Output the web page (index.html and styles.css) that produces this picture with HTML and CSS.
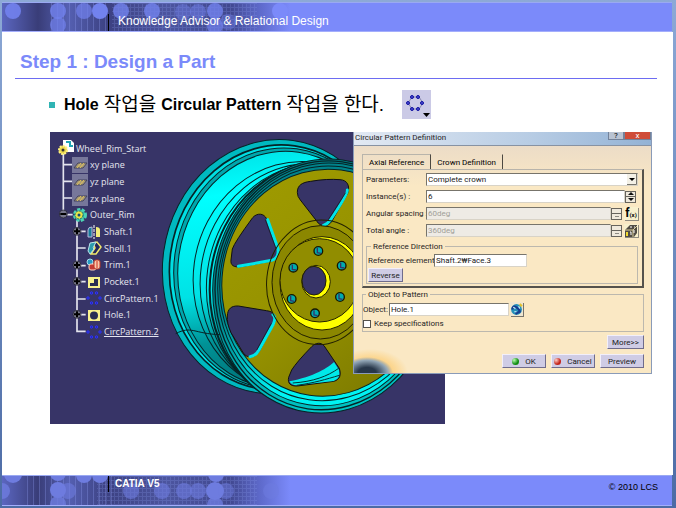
FILE: index.html
```html
<!DOCTYPE html>
<html lang="ko">
  <head>
    <meta charset="UTF-8" />
    <meta name="viewport" content="width=device-width, initial-scale=1.0" />
    <title>Knowledge Advisor &amp; Relational Design</title>
    <link rel="stylesheet" href="styles.css" />
  </head>
  <body>
    <!-- 公共图标 -->
    <svg class="defs" width="0" height="0" aria-hidden="true">
      <defs>
        <pattern id="grid" width="4" height="4" patternUnits="userSpaceOnUse">
          <path d="M0 .5H4M.5 0V4" stroke="#8c9cf2" stroke-width="1" opacity=".22" />
        </pattern>
        <pattern id="bars" width="6" height="30" patternUnits="userSpaceOnUse">
          <path d="M1.500 0V30" stroke="#8f9df5" opacity=".3" />
        </pattern>
        <linearGradient id="fade">
          <stop offset="0" stop-color="#5b66c0" />
          <stop offset=".12" stop-color="#393d78" />
          <stop offset=".22" stop-color="#5560b2" />
          <stop offset=".35" stop-color="#3c4182" />
          <stop offset=".55" stop-color="#4c559f" />
          <stop offset=".76" stop-color="#414890" />
          <stop offset=".86" stop-color="#5e6acb" />
          <stop offset=".96" stop-color="#7b8afa" />
        </linearGradient>
        <symbol id="plane" viewBox="0 0 16 16">
          <path d="M0 0H16V16H0z" fill="#77779a" />
          <path d="M2 11L6 6H15L11 11z" fill="#a99c76" stroke="#44445e" />
          <path d="M5 11L9 6M8 11L12 6" stroke="#e0c25c" />
        </symbol>
        <symbol id="circ" viewBox="0 0 16 16">
          <g fill="#28289c" stroke="#2e35ff">
            <circle cx="5.500" cy="3" r="1.200" /><circle cx="10.500" cy="3" r="1.200" />
            <circle cx="2" cy="8" r="1.200" /><circle cx="14" cy="8" r="1.200" />
            <circle cx="5.500" cy="13" r="1.200" /><circle cx="10.500" cy="13" r="1.200" />
          </g>
        </symbol>
      </defs>
    </svg>

    <div class="slide">
      <header class="band">
        <svg class="texture" width="300" height="29" aria-hidden="true">
          <path d="M0 0H300V29H0z" fill="url(#fade)" />
          <path d="M110 0H255V29H110z" fill="url(#grid)" />
          <path d="M46 0H108V29H46z" fill="url(#bars)" />
          <g fill="#7282ee">
            <circle cx="11" cy="8" r="8" opacity=".9" />
            <circle cx="56" cy="8" r="8" opacity=".8" />
            <circle cx="56" cy="22" r="8" opacity=".7" />
            <circle cx="82" cy="8" r="8" opacity=".7" />
            <circle cx="98" cy="8" r="8" />
            <circle cx="119" cy="8" r="8" opacity=".8" />
            <circle cx="150" cy="8" r="8" opacity=".8" />
            <circle cx="181" cy="9" r="8" opacity=".4" />
            <circle cx="196" cy="9" r="8" opacity=".5" />
            <circle cx="213" cy="8" r="8" opacity=".8" />
            <circle cx="213" cy="23" r="8" opacity=".7" />
            <circle cx="226" cy="19" r="8" opacity=".4" />
            <circle cx="278" cy="8" r="8" fill="#7b8afa" />
          </g>
        </svg>
        <p class="course">Knowledge Advisor &amp; Relational Design</p>
      </header>

      <main class="content">
        <h1 class="title">Step 1 : Design a Part</h1>
        <div class="lead">
          <p class="task">Hole <span class="ko">작업을</span> Circular Pattern <span class="ko">작업을 한다.</span></p>
          <svg class="tool" viewBox="0 0 29 29" role="img" aria-label="Circular Pattern">
            <path d="M0 0H29V29H0z" fill="#cbcae6" />
            <path d="M10 7H17L21 13L17 19H10L6 13z" fill="none" stroke="#8585ad" />
            <g fill="#4a4ad0" stroke="#1010a0">
              <circle cx="10" cy="7" r="1.500" /><circle cx="16" cy="7" r="1.500" />
              <circle cx="6" cy="13" r="1.500" /><circle cx="20" cy="13" r="1.500" />
              <circle cx="10" cy="19" r="1.500" /><circle cx="16" cy="19" r="1.500" />
            </g>
            <path d="M21 23H28L24.500 27z" />
          </svg>
        </div>

        <div class="figure">
          <div class="viewer">
            <!-- 轮毂模型 -->
            <svg class="model" viewBox="0 0 1185 876" aria-hidden="true">
              <defs>
                <linearGradient id="barrel" x1="0" y1="0" x2=".25" y2="1">
                  <stop offset="0" stop-color="#00d5db" />
                  <stop offset=".25" stop-color="#00ffff" />
                  <stop offset=".65" stop-color="#00e2e5" />
                  <stop offset=".85" stop-color="#009296" />
                  <stop offset="1" stop-color="#007b80" />
                </linearGradient>
                <linearGradient id="lip" x1=".2" y1="0" x2=".5" y2="1">
                  <stop offset="0" stop-color="#007f87" />
                  <stop offset=".6" stop-color="#008c93" />
                  <stop offset=".82" stop-color="#00b5b8" />
                  <stop offset="1" stop-color="#00c3c3" />
                </linearGradient>
                <linearGradient id="rim" x1="0" y1="0" x2=".2" y2="1">
                  <stop offset="0" stop-color="#008189" />
                  <stop offset=".7" stop-color="#008c93" />
                  <stop offset="1" stop-color="#00f3f3" />
                </linearGradient>
                <linearGradient id="face" x1="0" y1="0" x2="1" y2="1">
                  <stop offset="0" stop-color="#a09c00" />
                  <stop offset=".5" stop-color="#969200" />
                  <stop offset="1" stop-color="#777500" />
                </linearGradient>
              </defs>
              <path d="M0 0H1185V876H0z" fill="#373467" />
              <g fill="none" stroke="#062326" stroke-width="3">
                <ellipse cx="676" cy="404" rx="338" ry="382" transform="rotate(8 676 404)" fill="#00b9c0" />
                <ellipse cx="683" cy="406" rx="324" ry="368" transform="rotate(8 683 406)" fill="#00dfe3" stroke-width="5" />
                <ellipse cx="690" cy="409" rx="318" ry="362" transform="rotate(8 690 409)" fill="#00a7ad" />
                <ellipse cx="696" cy="412" rx="312" ry="355" transform="rotate(8 696 412)" fill="url(#barrel)" />
                <ellipse cx="748" cy="436" rx="318" ry="348" transform="rotate(8 748 436)" />
                <ellipse cx="769" cy="446" rx="318" ry="352" transform="rotate(8 769 446)" />
                <ellipse cx="790" cy="456" rx="320" ry="362" transform="rotate(8 790 456)" />
                <ellipse cx="804" cy="460" rx="324" ry="370" transform="rotate(8 804 460)" stroke-width="6" />
                <path d="M377 605C425 580 430 605 510 608" />
                <ellipse cx="825" cy="462" rx="336" ry="382" transform="rotate(8 825 462)" fill="url(#lip)" />
                <ellipse cx="825" cy="460" rx="329" ry="374" transform="rotate(8 825 460)" stroke-width="4" />
                <ellipse cx="826" cy="457" rx="322" ry="365" transform="rotate(8 826 457)" fill="url(#rim)" />
                <ellipse cx="826" cy="454" rx="316" ry="353" transform="rotate(8 826 454)" />
                <ellipse cx="826" cy="452" rx="310" ry="341" transform="rotate(8 826 452)" fill="url(#face)" />
              </g>
              <g fill="#373467" stroke="#111" stroke-width="3">
                <path d="M742 181C742 160 756 151 782 148C817 142 844 141 870 143C892 144 901 162 893 184L846 267C835 286 811 286 800 267L751 204Q742 194 742 181z" />
                <path d="M608 257C621 242 642 243 650 261L684 352C690 372 683 381 664 387L573 404C550 407 541 399 543 384L547 351Q554 330 608 257z" />
                <path d="M532 552C533 530 544 521 565 522L649 536C673 539 681 550 673 574L629 656C617 678 591 681 580 663L543 602Q530 573 532 552z" />
                <path d="M785 644C798 631 813 631 822 641L868 709C874 729 870 743 851 748L742 762C721 763 712 754 716 736L725 714Q740 690 785 644z" />
              </g>
              <path d="M718 748C790 735 838 705 852 690L867 714Q873 740 851 747L742 760Q725 761 718 748z" fill="#00e9e9" />
              <path d="M728 753C790 749 832 733 866 709M740 760C792 753 828 742 868 730" fill="none" stroke="#033" stroke-width="3" />
              <g fill="none" stroke="#00e6e9" stroke-width="9" stroke-linecap="round">
                <path d="M892 174Q895 184 840 266Q832 277 820 280" />
                <path d="M653 263L684 350Q688 378 665 385L565 403" />
                <path d="M669 548Q679 556 670 576L627 654Q617 672 600 674" />
              </g>
              <g fill="none" stroke="#111" stroke-width="2">
                <path d="M887 182L835 263M646 263L678 350M664 574L620 654" />
              </g>
              <g fill="none" stroke="#222000" stroke-width="3">
                <ellipse cx="810" cy="451" rx="160" ry="187" transform="rotate(6 810 451)" />
                <ellipse cx="811" cy="451" rx="145" ry="170" fill="#8b8700" />
                <ellipse cx="816" cy="454" rx="126" ry="140" fill="#ffff00" />
                <ellipse cx="809" cy="445" rx="119" ry="125" fill="#918d00" />
                <ellipse cx="798" cy="449" rx="43" ry="49" fill="#ffff00" />
                <ellipse cx="792" cy="446" rx="36" ry="43" fill="#373467" />
              </g>
              <g fill="#00aaae" stroke="#171700" stroke-width="4">
                <circle cx="805" cy="357" r="13" /><circle cx="730" cy="407" r="13" />
                <circle cx="875" cy="401" r="13" /><circle cx="725" cy="501" r="13" />
                <circle cx="795" cy="544" r="13" /><circle cx="870" cy="495" r="13" />
                <path d="M802 348V362L813 364M727 398V412L738 414M872 392V406L883 408M722 492V506L733 508M792 535V549L803 551M867 486V500L878 502" fill="none" stroke="#373467" />
              </g>
              <!-- 结构树连线 -->
              <g fill="none" stroke="#e4e4ee" stroke-width="5">
                <path d="M40 65V245M40 98H66M40 148H66M40 198H66M40 248H68" />
                <path d="M81 265V598H107M81 298H107M81 348H107M81 401H107M81 449H107M81 501H107M81 548H107" />
              </g>
              <g fill="#77778c" stroke="#191926" stroke-width="2">
                <circle cx="40" cy="246" r="12" /><circle cx="81" cy="298" r="12" />
                <circle cx="81" cy="399" r="12" /><circle cx="81" cy="448" r="12" /><circle cx="81" cy="547" r="12" />
              </g>
              <path d="M31 246H49M72 298H90M81 289V307M72 399H90M81 390V408M72 448H90M81 439V457M72 547H90M81 538V556" stroke="#000" stroke-width="6" />
            </svg>

            <ul class="tree">
              <li class="root">
                <svg viewBox="0 0 16 16"><path d="M5 0H13L16 3V12H5z" fill="#fff" /><path d="M8 2H12V6H15" fill="none" stroke="#21a5b5" stroke-width="2" /><circle cx="5" cy="10" r="4" fill="#ead64e" stroke="#fff17c" stroke-width="2" stroke-dasharray="2 1" /><circle cx="5" cy="10" r="1.500" fill="#333" /></svg>
                Wheel_Rim_Start
              </li>
              <li class="plane"><svg><use href="#plane" /></svg>xy plane</li>
              <li class="plane"><svg><use href="#plane" /></svg>yz plane</li>
              <li class="plane"><svg><use href="#plane" /></svg>zx plane</li>
              <li class="plane">
                <svg viewBox="0 0 16 16"><circle cx="8" cy="8" r="5.500" fill="#2fafa0" stroke="#4cd2b4" stroke-width="3" stroke-dasharray="3 1.500" /><circle cx="7" cy="8" r="4" fill="#e7e548" stroke="#176d72" stroke-dasharray="2 1" /><circle cx="7" cy="8" r="1.500" fill="#174c72" /></svg>
                Outer_Rim
              </li>
              <li class="leaf">
                <svg viewBox="0 0 16 16"><path d="M6 3Q2 3 2 6V13H6z" fill="#187d9b" stroke="#bbd" /><path d="M10 3Q14 3 14 6V13H10z" fill="#f2ec79" /><path d="M8 1V15" stroke="#fff" stroke-dasharray="3 1" /></svg>
                Shaft.1
              </li>
              <li class="leaf">
                <svg viewBox="0 0 16 16"><path d="M7 3L11 2L15 7L10 14H5L9 8z" fill="#24275e" stroke="#f0e76b" stroke-width="1.500" /><path d="M4 3L10 2L7 8L8 9L4 14L2 11z" fill="#2b9bad" stroke="#b9e5ec" /></svg>
                Shell.1
              </li>
              <li class="leaf">
                <svg viewBox="0 0 16 16"><circle cx="4" cy="5" r="3" fill="#279ac4" stroke="#a9deed" /><rect x="3" y="7" width="7" height="6" rx="2" fill="#c43b35" stroke="#ffd3c2" /><rect x="8" y="3" width="6" height="9" rx="2" fill="#f9c9ad" stroke="#b93625" /><path d="M11 4V11" stroke="#d2331e" /></svg>
                Trim.1
              </li>
              <li class="leaf">
                <svg viewBox="0 0 16 16"><path d="M3 4H13V13H3z" fill="#292d54" stroke="#f8f18d" stroke-width="2" /><path d="M3 4H8V9H3z" fill="#f8f18d" /></svg>
                Pocket.1
              </li>
              <li class="leaf"><svg><use href="#circ" /></svg>CircPattern.1</li>
              <li class="leaf">
                <svg viewBox="0 0 16 16"><path d="M3 4H13V13H3z" fill="#f8f18d" stroke="#f8f18d" stroke-width="2" /><circle cx="8" cy="8.500" r="4" fill="#292d54" /></svg>
                Hole.1
              </li>
              <li class="leaf"><svg><use href="#circ" /></svg><u>CircPattern.2</u></li>
            </ul>
          </div>

          <!-- 圆形阵列对话框 -->
          <form class="dialog">
            <div class="caption">
              <h2>Circular Pattern Definition</h2>
              <button class="help" type="button">?</button>
              <button class="close" type="button">x</button>
            </div>
            <div class="dialog-body">
              <div class="tabs">
                <button class="tab active" type="button">Axial Reference</button>
                <button class="tab" type="button">Crown Definition</button>
              </div>
              <div class="panel">
                <div class="row">
                  <label for="parameters">Parameters:</label>
                  <div class="choice">
                    <select id="parameters"><option>Complete crown</option></select>
                    <svg viewBox="0 0 10 11" aria-hidden="true"><path d="M0 0H10V11H0z" fill="#f3f0e6" /><path d="M9.500 0V10.500H0" fill="none" stroke="#77756d" /><path d="M2 4H8L5 7z" /></svg>
                  </div>
                </div>
                <div class="row">
                  <label for="instances">Instance(s) :</label>
                  <input id="instances" type="text" value="6" />
                  <span class="spin"><button type="button" aria-label="+"></button><button type="button" aria-label="-"></button></span>
                </div>
                <div class="row">
                  <label for="spacing">Angular spacing :</label>
                  <input id="spacing" type="text" value="60deg" disabled />
                  <span class="spin off"><button type="button" aria-label="+"></button><button type="button" aria-label="-"></button></span>
                  <button class="formula" type="button">f<small>(x)</small></button>
                </div>
                <div class="row">
                  <label for="total">Total angle :</label>
                  <input id="total" type="text" value="360deg" disabled />
                  <span class="spin off"><button type="button" aria-label="+"></button><button type="button" aria-label="-"></button></span>
                  <button class="formula" type="button" aria-label="formula">
                    <svg viewBox="0 0 14 14"><path d="M1 6L6 1H13V9L10 13H1z" fill="#504b43" /><path d="M1 6H9V13M9 6L13 2" fill="none" stroke="#d9ce9d" /><path d="M2 8H4V12H2z" fill="#f0d82f" /><path d="M6 8H7V11M10 6V9M6 3H8M10 3H11" stroke="#fff" fill="none" /></svg>
                  </button>
                </div>
                <fieldset class="direction">
                  <legend>Reference Direction</legend>
                  <div class="field">
                    <label for="element">Reference element:</label>
                    <input id="element" type="text" value="Shaft.2₩Face.3" />
                  </div>
                  <button class="btn reverse" type="button">Reverse</button>
                </fieldset>
              </div>
              <fieldset class="object">
                <legend>Object to Pattern</legend>
                <div class="field">
                  <label for="object">Object:</label>
                  <input id="object" type="text" value="Hole.1" />
                  <button class="pick" type="button" aria-label="Select">
                    <svg viewBox="0 0 12 12"><circle cx="6" cy="6" r="5" fill="#248fb9" /><path d="M2 6Q3 2 6 4T9 8L5 10" fill="none" stroke="#163b8f" stroke-width="2" /><path d="M3 4L5 5M8 3L9 5M4 8H6" stroke="#d5f7ff" /><path d="M9 1L11 3" stroke="#e3c12c" stroke-width="2" /></svg>
                  </button>
                </div>
                <label class="check"><input type="checkbox" />Keep specifications</label>
              </fieldset>
              <div class="more"><button class="btn" type="button">More&gt;&gt;</button></div>
              <div class="actions">
                <button class="btn" type="button"><i class="dot green"></i>OK</button>
                <button class="btn" type="button"><i class="dot red"></i>Cancel</button>
                <button class="btn" type="button">Preview</button>
              </div>
            </div>
          </form>
        </div>
      </main>

      <footer class="band foot">
        <svg class="texture" width="300" height="29" aria-hidden="true">
          <path d="M0 0H300V29H0z" fill="url(#fade)" />
          <path d="M20 0H110V29H20z" fill="url(#bars)" />
          <path d="M95 0H255V29H95z" fill="url(#grid)" />
          <g fill="#6e7cdf">
            <circle cx="11" cy="-2" r="9" /><circle cx="0" cy="15" r="8" opacity=".8" />
            <circle cx="56" cy="-3" r="8" /><circle cx="56" cy="14" r="8" /><circle cx="66" cy="15" r="8" opacity=".6" />
            <circle cx="56" cy="28" r="8" opacity=".8" />
            <circle cx="82" cy="-1" r="8" /><circle cx="98" cy="-1" r="8" />
            <circle cx="129" cy="15" r="8" opacity=".6" /><circle cx="160" cy="15" r="8" opacity=".6" />
            <circle cx="182" cy="15" r="8" opacity=".6" /><circle cx="196" cy="15" r="8" opacity=".6" />
            <circle cx="214" cy="-2" r="8" /><circle cx="213" cy="15" r="9" /><circle cx="224" cy="15" r="8" opacity=".5" />
            <circle cx="213" cy="29" r="8" opacity=".8" /><circle cx="269" cy="15" r="8" opacity=".5" />
          </g>
        </svg>
        <p class="product">CATIA V5</p>
        <p class="copyright">© 2010 LCS</p>
      </footer>
    </div>
  </body>
</html>
```
FILE: styles.css
```css
* {
  box-sizing: border-box;
  margin: 0;
  padding: 0;
}

body {
  background: linear-gradient(#8da9d6, #4c6ba5);
  font-family: "Liberation Sans", "Noto Sans CJK KR", sans-serif;
}
.defs {
  position: absolute;
}

.slide {
  display: flex;
  flex-direction: column;
  min-height: 100vh;
  padding: 2px 4px 2px 2px;
}

/* 顶部与底部色带 */
.band {
  display: grid;
  grid-template-columns: 106px 1fr auto;
  height: 30px;
  background: #7b8afa;
  border-top: 1px solid #9aa9f2;
  border-bottom: 1px solid #a4aefc;
  overflow: hidden;
}
.texture {
  grid-area: 1 / 1 / 2 / 4;
}
.course,
.product {
  grid-area: 1 / 2;
  align-self: end;
  height: 18px;
  padding-left: 9px;
  border-left: 1px solid #000;
  color: #fff;
  font-size: 12px;
  line-height: 15px;
}
.foot {
  height: 31px;
}
.product {
  align-self: start;
  height: 16px;
  padding-left: 6px;
  font-size: 10px;
  font-weight: bold;
}
.copyright {
  grid-area: 1 / 3;
  padding-right: 14px;
  font-size: 9px;
  line-height: 22px;
}

.content {
  flex: 1;
  margin-right: -1px;
  padding: 18px 16px 0 13px;
  background: #fff;
}
.title {
  padding: 0 5px 4px;
  border-bottom: 1px solid #6d6cf2;
  color: #7b8afa;
  font-size: 19px;
  line-height: 24px;
}
.lead {
  display: flex;
  align-items: center;
  gap: 18px;
  height: 29px;
  margin: 11px 0 13px 34px;
}
.task {
  display: flex;
  align-items: center;
  gap: 5px;
  font-size: 16px;
  font-weight: bold;
  line-height: 24px;
  white-space: nowrap;
}
.task::before {
  content: "";
  width: 6px;
  height: 6px;
  margin-right: 4px;
  background: #30b4b4;
}
.ko {
  font-size: 19px;
  font-weight: normal;
}
.tool {
  width: 29px;
  height: 29px;
}

/* 模型窗口 */
.figure {
  position: relative;
  width: 602px;
  max-width: 100%;
  margin-left: 35px;
}
.viewer {
  position: relative;
  width: 395px;
}
.model {
  display: block;
  width: 100%;
}
.tree {
  position: absolute;
  top: 8px;
  left: 8px;
  display: grid;
  grid-auto-rows: 1fr;
  height: 200px;
  color: #e6e6f0;
  font-family: "Open Sans", sans-serif;
  font-size: 9px;
  list-style: none;
}
.tree li {
  display: flex;
  align-items: center;
  gap: 2px;
}
.tree svg {
  width: 16px;
  height: 16px;
}
.tree .plane {
  padding-left: 14px;
}
.tree .leaf {
  padding-left: 28px;
}

/* 对话框 */
.dialog {
  position: absolute;
  top: 0;
  right: 0;
  width: 299px;
  border: 1px solid #8a9bb8;
  border-top: 0;
  background: #fae8c4;
  color: #26241f;
}
.dialog,
.dialog input,
.dialog select,
.dialog button {
  font-family: Roboto, "Noto Sans CJK KR", sans-serif;
  font-size: 8px;
  line-height: 11px;
}
.caption {
  display: flex;
  align-items: flex-start;
  height: 14px;
  border-bottom: 1px solid #8792a3;
  background: linear-gradient(90deg, #e2e9f3, #b7cce4 60%, #93b2d5);
}
.caption h2 {
  flex: 1;
  padding-left: 1px;
  font-size: 8px;
  font-weight: normal;
}
.caption button {
  height: 8px;
  border: 1px solid #73829a;
  border-top: 0;
  line-height: 6px;
}
.help {
  width: 16px;
  background: #b9c3d2;
}
.caption .close {
  width: 27px;
  background: #cf4c38;
  color: #fff;
}
.dialog-body {
  padding: 8px 7px 5px 8px;
  background:
    radial-gradient(ellipse 26px 16px at 13px 100%, #28374a 35%, #94a8b8 80%, transparent),
    radial-gradient(ellipse 38px 24px at 16px 100%, #ffb632, transparent),
    linear-gradient(#ecdcc7, #fae8c4 40px);
}
.tabs {
  display: flex;
}
.tab {
  height: 15px;
  padding: 0 6px;
  border: 0;
  border-top: 1px solid transparent;
  border-right: 1px solid #4c4942;
  background: none;
}
.tab.active {
  border-top-color: #b8b4ab;
  border-left: 1px solid #b8b4ab;
}
.panel {
  display: grid;
  gap: 4px;
  padding: 3px 4px 2px 3px;
  border: 1px solid #b8b4ab;
  border-right: 2px solid #55524c;
  border-bottom: 2px solid #55524c;
}
.row {
  display: flex;
  align-items: center;
}
.row label {
  width: 60px;
  white-space: nowrap;
}
.dialog input,
.dialog select {
  min-width: 0;
  height: 13px;
  padding: 0 1px;
  border: 1px solid #d8d3c7;
  border-top-color: #77746b;
  border-left-color: #77746b;
  border-radius: 0;
  background: #fff;
  color: #222;
}
.row input,
.choice {
  flex: 1;
}
.dialog input:disabled {
  background: #eeebe5;
  color: #a19f98;
}
.choice {
  display: grid;
}
.choice select {
  grid-area: 1 / 1;
  width: 100%;
  appearance: none;
}
.choice svg {
  grid-area: 1 / 1;
  place-self: center end;
  width: 10px;
  height: 11px;
  margin-right: 1px;
  pointer-events: none;
}
.spin {
  display: grid;
  width: 11px;
  height: 12px;
  margin-right: 2px;
  border: 1px solid #67645d;
}
.spin button {
  display: grid;
  place-items: center;
  border: 0;
  background: #efe9dc;
}
.spin button + button {
  border-top: 1px solid #67645d;
}
.spin button::before {
  content: "";
  border: 3px solid transparent;
  border-top: 0;
  border-bottom: 3px solid #111;
}
.spin button + button::before {
  border-top: 3px solid #111;
  border-bottom: 0;
}
.spin.off button::before {
  border-width: 1px 2px 0;
  border-color: #8d8a82;
}
.dialog .formula {
  width: 14px;
  height: 13px;
  border: 0;
  background: #f8f0cd;
  box-shadow: 1px 1px #8f8b80;
  font-size: 12px;
  font-weight: bold;
}
.formula small {
  font-size: 6px;
}
.formula svg {
  display: block;
}
fieldset {
  min-width: 0;
  border: 1px solid #bcb8ae;
}
legend {
  margin-left: 3px;
  padding: 0 2px;
}
.direction {
  padding: 2px 1px 1px;
}
.field {
  display: flex;
  align-items: center;
  gap: 1px;
}
.direction label {
  width: 65px;
  white-space: nowrap;
}
.direction input {
  width: 93px;
}
.btn {
  display: flex;
  align-items: center;
  justify-content: center;
  height: 14px;
  border: 1px solid #f2effa;
  border-right-color: #6f6c8c;
  border-bottom-color: #6f6c8c;
  background: #cfcce5;
  color: #222;
}
.reverse {
  width: 35px;
  margin-top: 1px;
}
.object {
  margin-top: 1px;
  padding: 2px 0;
}
.object input[type="text"] {
  width: 120px;
}
.pick {
  width: 13px;
  height: 14px;
  border: 0;
  background: #efe6d0;
  box-shadow: 1px 1px #77746b;
}
.pick svg {
  display: block;
}
.check {
  display: flex;
  align-items: center;
  gap: 3px;
  margin-top: 2px;
}
.dialog .check input {
  width: 8px;
  height: 8px;
  border: 1px solid #55524c;
  appearance: none;
}
.more,
.actions {
  display: flex;
  justify-content: flex-end;
  gap: 5px;
  margin-top: 3px;
}
.more .btn {
  width: 37px;
}
.actions {
  margin-top: 5px;
}
.actions .btn {
  width: 44px;
  gap: 6px;
}
.dot {
  width: 7px;
  height: 7px;
  border-radius: 50%;
}
.green {
  background: radial-gradient(circle at 30% 30%, #b9ffb0, #128c12 60%);
}
.red {
  background: radial-gradient(circle at 30% 30%, #ffd0c8, #c4241a 60%);
}
```
